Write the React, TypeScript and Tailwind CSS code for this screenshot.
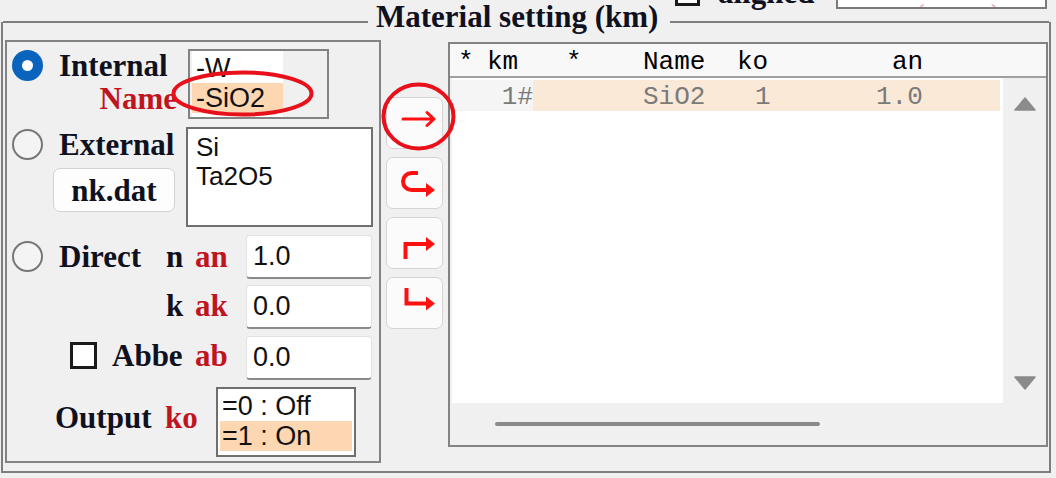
import React from 'react';

const label = "font-['Liberation_Serif',serif] font-bold text-[31px] leading-none text-[#10111f]";
const redLabel = "font-['Liberation_Serif',serif] font-bold text-[31px] leading-none text-[#c0151f]";
const sans = "font-['Liberation_Sans',Arial,sans-serif] text-[27px] leading-none text-[#111]";
const mono = "font-['Liberation_Mono',monospace] text-[26px] leading-none";

const Radio = ({ checked = false }: { checked?: boolean }) =>
  checked ? (
    <div className="ml-[5px] w-[31px] h-[31px] rounded-full bg-[#0a63bd] flex items-center justify-center shrink-0">
      <div className="w-[11px] h-[11px] rounded-full bg-white" />
    </div>
  ) : (
    <div className="ml-[5px] w-[31px] h-[31px] rounded-full border-[2.5px] border-[#777] bg-[#f4f4f4] shrink-0" />
  );

const Field = ({ value }: { value: string }) => (
  <div className={`w-[126px] h-[44px] bg-white rounded-[4px] border border-[#e2e2e2] border-b-2 border-b-[#8a8a8a] pl-[6px] flex items-center ${sans}`}>
    {value}
  </div>
);

const ArrowRight = () => (
  <svg width="57" height="52" viewBox="0 0 57 52">
    <path d="M16 21 H47 M40 14.5 L47 21 L40 27.5" stroke="#ff1010" strokeWidth="3" fill="none" strokeLinecap="round" strokeLinejoin="round" />
  </svg>
);

const ArrowLoop = () => (
  <svg width="57" height="52" viewBox="0 0 57 52">
    <path d="M31 15 H24.5 A8.5 8.5 0 0 0 24.5 32 H40" stroke="#ff1010" strokeWidth="4" fill="none" />
    <polygon points="39,25 48,32 39,39" fill="#ff1010" />
  </svg>
);

const ArrowUpRight = () => (
  <svg width="57" height="52" viewBox="0 0 57 52">
    <path d="M18.5 41 V26 H40" stroke="#ff1010" strokeWidth="4" fill="none" />
    <polygon points="39,19 48,26 39,33" fill="#ff1010" />
  </svg>
);

const ArrowDownRight = () => (
  <svg width="57" height="52" viewBox="0 0 57 52">
    <path d="M19.5 10 V25.5 H40" stroke="#ff1010" strokeWidth="4" fill="none" />
    <polygon points="39,18.5 48,25.5 39,32.5" fill="#ff1010" />
  </svg>
);

const SideButton = ({ children }: { children: React.ReactNode }) => (
  <div className="w-[57px] h-[52px] rounded-[7px] bg-[#fbfbfb] border border-[#d5d5d5]">{children}</div>
);

const Tri = ({ up }: { up?: boolean }) => (
  <svg width="22" height="14" viewBox="0 0 22 14">
    <polygon points={up ? '11,1 21,13 1,13' : '1,1 21,1 11,13'} fill="#8b8b8b" stroke="#8b8b8b" strokeWidth="1.5" strokeLinejoin="round" />
  </svg>
);

export default function App() {
  return (
    <div className="relative w-[1056px] h-[478px] bg-[#f0f0f0] overflow-hidden flex flex-col pl-px">
      {/* partly hidden row above the group */}
      <div className="h-[10px] flex items-end pl-[674px] shrink-0">
        <div className="w-[25px] h-[25px] border-[3px] border-[#1a1a1a] bg-white mb-[4px]" />
        <span className={`ml-[18px] mb-[2px] ${label}`}>aligned</span>
        <div className="ml-[22px] mb-px w-[211px] h-[40px] border-2 border-[#7a7a7a] bg-white flex items-end pl-[76px] pb-[2px] overflow-hidden">
          <span className="font-['Liberation_Serif',serif] text-[31px] leading-none text-[#e7a3ad] translate-y-[26px]">(</span>
          <span className="ml-[66px] font-['Liberation_Serif',serif] text-[31px] leading-none text-[#e7a3ad] translate-y-[26px]">)</span>
        </div>
      </div>

      {/* group frame */}
      <div className="mt-[12px] w-[1050px] border-x-2 border-b-2 border-[#7e7e7e] flex flex-col">
        <div className="-mt-[21px] h-[32px] flex items-start">
          <div className="mt-[20px] w-[365px] h-[2px] bg-[#7e7e7e]" />
          <span className={`pl-[8px] pr-[12px] ${label}`}>Material setting (km)</span>
          <div className="mt-[20px] flex-1 h-[2px] bg-[#7e7e7e]" />
        </div>

        <div className="mt-[7px] pl-[2px] pr-px pb-[8px] flex items-start">
          {/* left panel */}
          <div className="w-[376px] h-[423px] border-2 border-[#838383] flex flex-col">
            <div className="flex h-[80px]">
              <div className="w-[181px] flex flex-col">
                <div className="mt-[6px] h-[34px] flex items-center">
                  <Radio checked />
                  <span className={`ml-[16px] ${label}`}>Internal</span>
                </div>
                <div className={`mt-px pr-[11px] text-right ${redLabel}`}>Name</div>
              </div>
              <div className="mt-[7px] w-[141px] h-[70px] border-2 border-[#828282] bg-[#f0f0f0] flex">
                <div className="ml-[2px] w-[91px] h-full bg-white pt-[2px]">
                  <div className={`h-[30px] pl-[4px] flex items-center ${sans}`}>-W</div>
                  <div className={`h-[30px] pl-[4px] flex items-center bg-[#fdd6b2] ${sans}`}>-SiO2</div>
                </div>
              </div>
            </div>

            <div className="flex h-[108px]">
              <div className="w-[179px] flex flex-col">
                <div className="mt-[7px] h-[31px] flex items-center">
                  <Radio />
                  <span className={`ml-[16px] ${label}`}>External</span>
                </div>
                <div className={`mt-[8px] ml-[46px] w-[122px] h-[44px] rounded-[7px] bg-[#fdfdfd] border border-[#d3d3d3] flex items-center justify-center ${label}`}>
                  nk.dat
                </div>
              </div>
              <div className="mt-[5px] w-[187px] h-[100px] border-2 border-[#6f6f6f] bg-white pl-[8px] pt-[4px] font-['Liberation_Sans',Arial,sans-serif] text-[26px] leading-[29px] text-[#111]">
                <div>Si</div>
                <div>Ta2O5</div>
              </div>
            </div>

            <div className="mt-[5px] h-[44px] flex items-center">
              <div className="mb-[2px] flex items-center">
                <Radio />
                <span className={`ml-[16px] w-[107px] ${label}`}>Direct</span>
                <span className={`w-[29px] ${label}`}>n</span>
                <span className={`w-[51px] ${redLabel}`}>an</span>
              </div>
              <Field value="1.0" />
            </div>

            <div className="mt-[6px] h-[44px] flex items-center pl-[159px]">
              <div className="mb-[4px] flex items-center">
                <span className={`w-[29px] ${label}`}>k</span>
                <span className={`w-[51px] ${redLabel}`}>ak</span>
              </div>
              <Field value="0.0" />
            </div>

            <div className="mt-[7px] h-[44px] flex items-center">
              <div className="mb-[6px] flex items-center">
                <div className="ml-[63px] w-[27px] h-[27px] border-[3px] border-[#1a1a1a] bg-white" />
                <span className={`ml-[15px] w-[83px] ${label}`}>Abbe</span>
                <span className={`w-[51px] ${redLabel}`}>ab</span>
              </div>
              <Field value="0.0" />
            </div>

            <div className="mt-[7px] h-[70px] flex items-center">
              <div className="mb-[10px] flex items-center">
                <span className={`ml-[48px] w-[110px] ${label}`}>Output</span>
                <span className={`w-[51px] ${redLabel}`}>ko</span>
              </div>
              <div className="w-[140px] h-[70px] border-2 border-[#6f6f6f] bg-white p-[2px]">
                <div className={`h-[30px] pl-[2px] flex items-center ${sans}`}>=0 : Off</div>
                <div className={`h-[30px] pl-[2px] flex items-center bg-[#fdd6b2] ${sans}`}>=1 : On</div>
              </div>
            </div>
          </div>

          {/* transfer buttons */}
          <div className="ml-[5px] mt-[57px] flex flex-col gap-[8px]">
            <SideButton><ArrowRight /></SideButton>
            <SideButton><ArrowLoop /></SideButton>
            <SideButton><ArrowUpRight /></SideButton>
            <SideButton><ArrowDownRight /></SideButton>
          </div>

          {/* km list */}
          <div className="ml-[5px] mt-[2px] w-[600px] h-[405px] border-2 border-[#838383] flex flex-col">
            <div className={`h-[34px] bg-[#f8f8f8] border-b-2 border-[#a0a0a0] flex items-center pl-[8px] pt-[3px] text-black ${mono}`}>
              <span className="w-[29px]">*</span>
              <span className="w-[79px]">km</span>
              <span className="w-[77px]">*</span>
              <span className="w-[94px]">Name</span>
              <span className="w-[155px]">ko</span>
              <span>an</span>
            </div>
            <div className="flex h-[325px]">
              <div className="ml-[2px] w-[551px] h-full bg-white pt-[2px]">
                <div className={`h-[31px] flex text-[#7a7a7a] ${mono}`}>
                  <div className="w-[81px] bg-[#f5f5f5] flex items-center justify-end pt-[2px]">1#</div>
                  <div className="w-[467px] bg-[#fbe9d8] flex items-center pt-[2px]">
                    <span className="ml-[110px] w-[112px]">SiO2</span>
                    <span className="w-[121px]">1</span>
                    <span>1.0</span>
                  </div>
                </div>
              </div>
              <div className="flex-1 flex flex-col items-center justify-between pt-[19px] pb-[13px]">
                <Tri up />
                <Tri />
              </div>
            </div>
            <div className="flex-1">
              <div className="ml-[45px] mt-[19px] w-[325px] h-[4px] rounded-full bg-[#8a8a8a]" />
            </div>
          </div>
        </div>
      </div>

      {/* red annotation ellipses */}
      <svg className="absolute left-0 top-0 pointer-events-none" width="1056" height="478">
        <ellipse cx="242.5" cy="93.5" rx="69" ry="21" stroke="#e8101a" strokeWidth="4" fill="none" />
        <ellipse cx="418.5" cy="116.5" rx="35" ry="32" stroke="#e8101a" strokeWidth="4" fill="none" />
      </svg>
    </div>
  );
}
